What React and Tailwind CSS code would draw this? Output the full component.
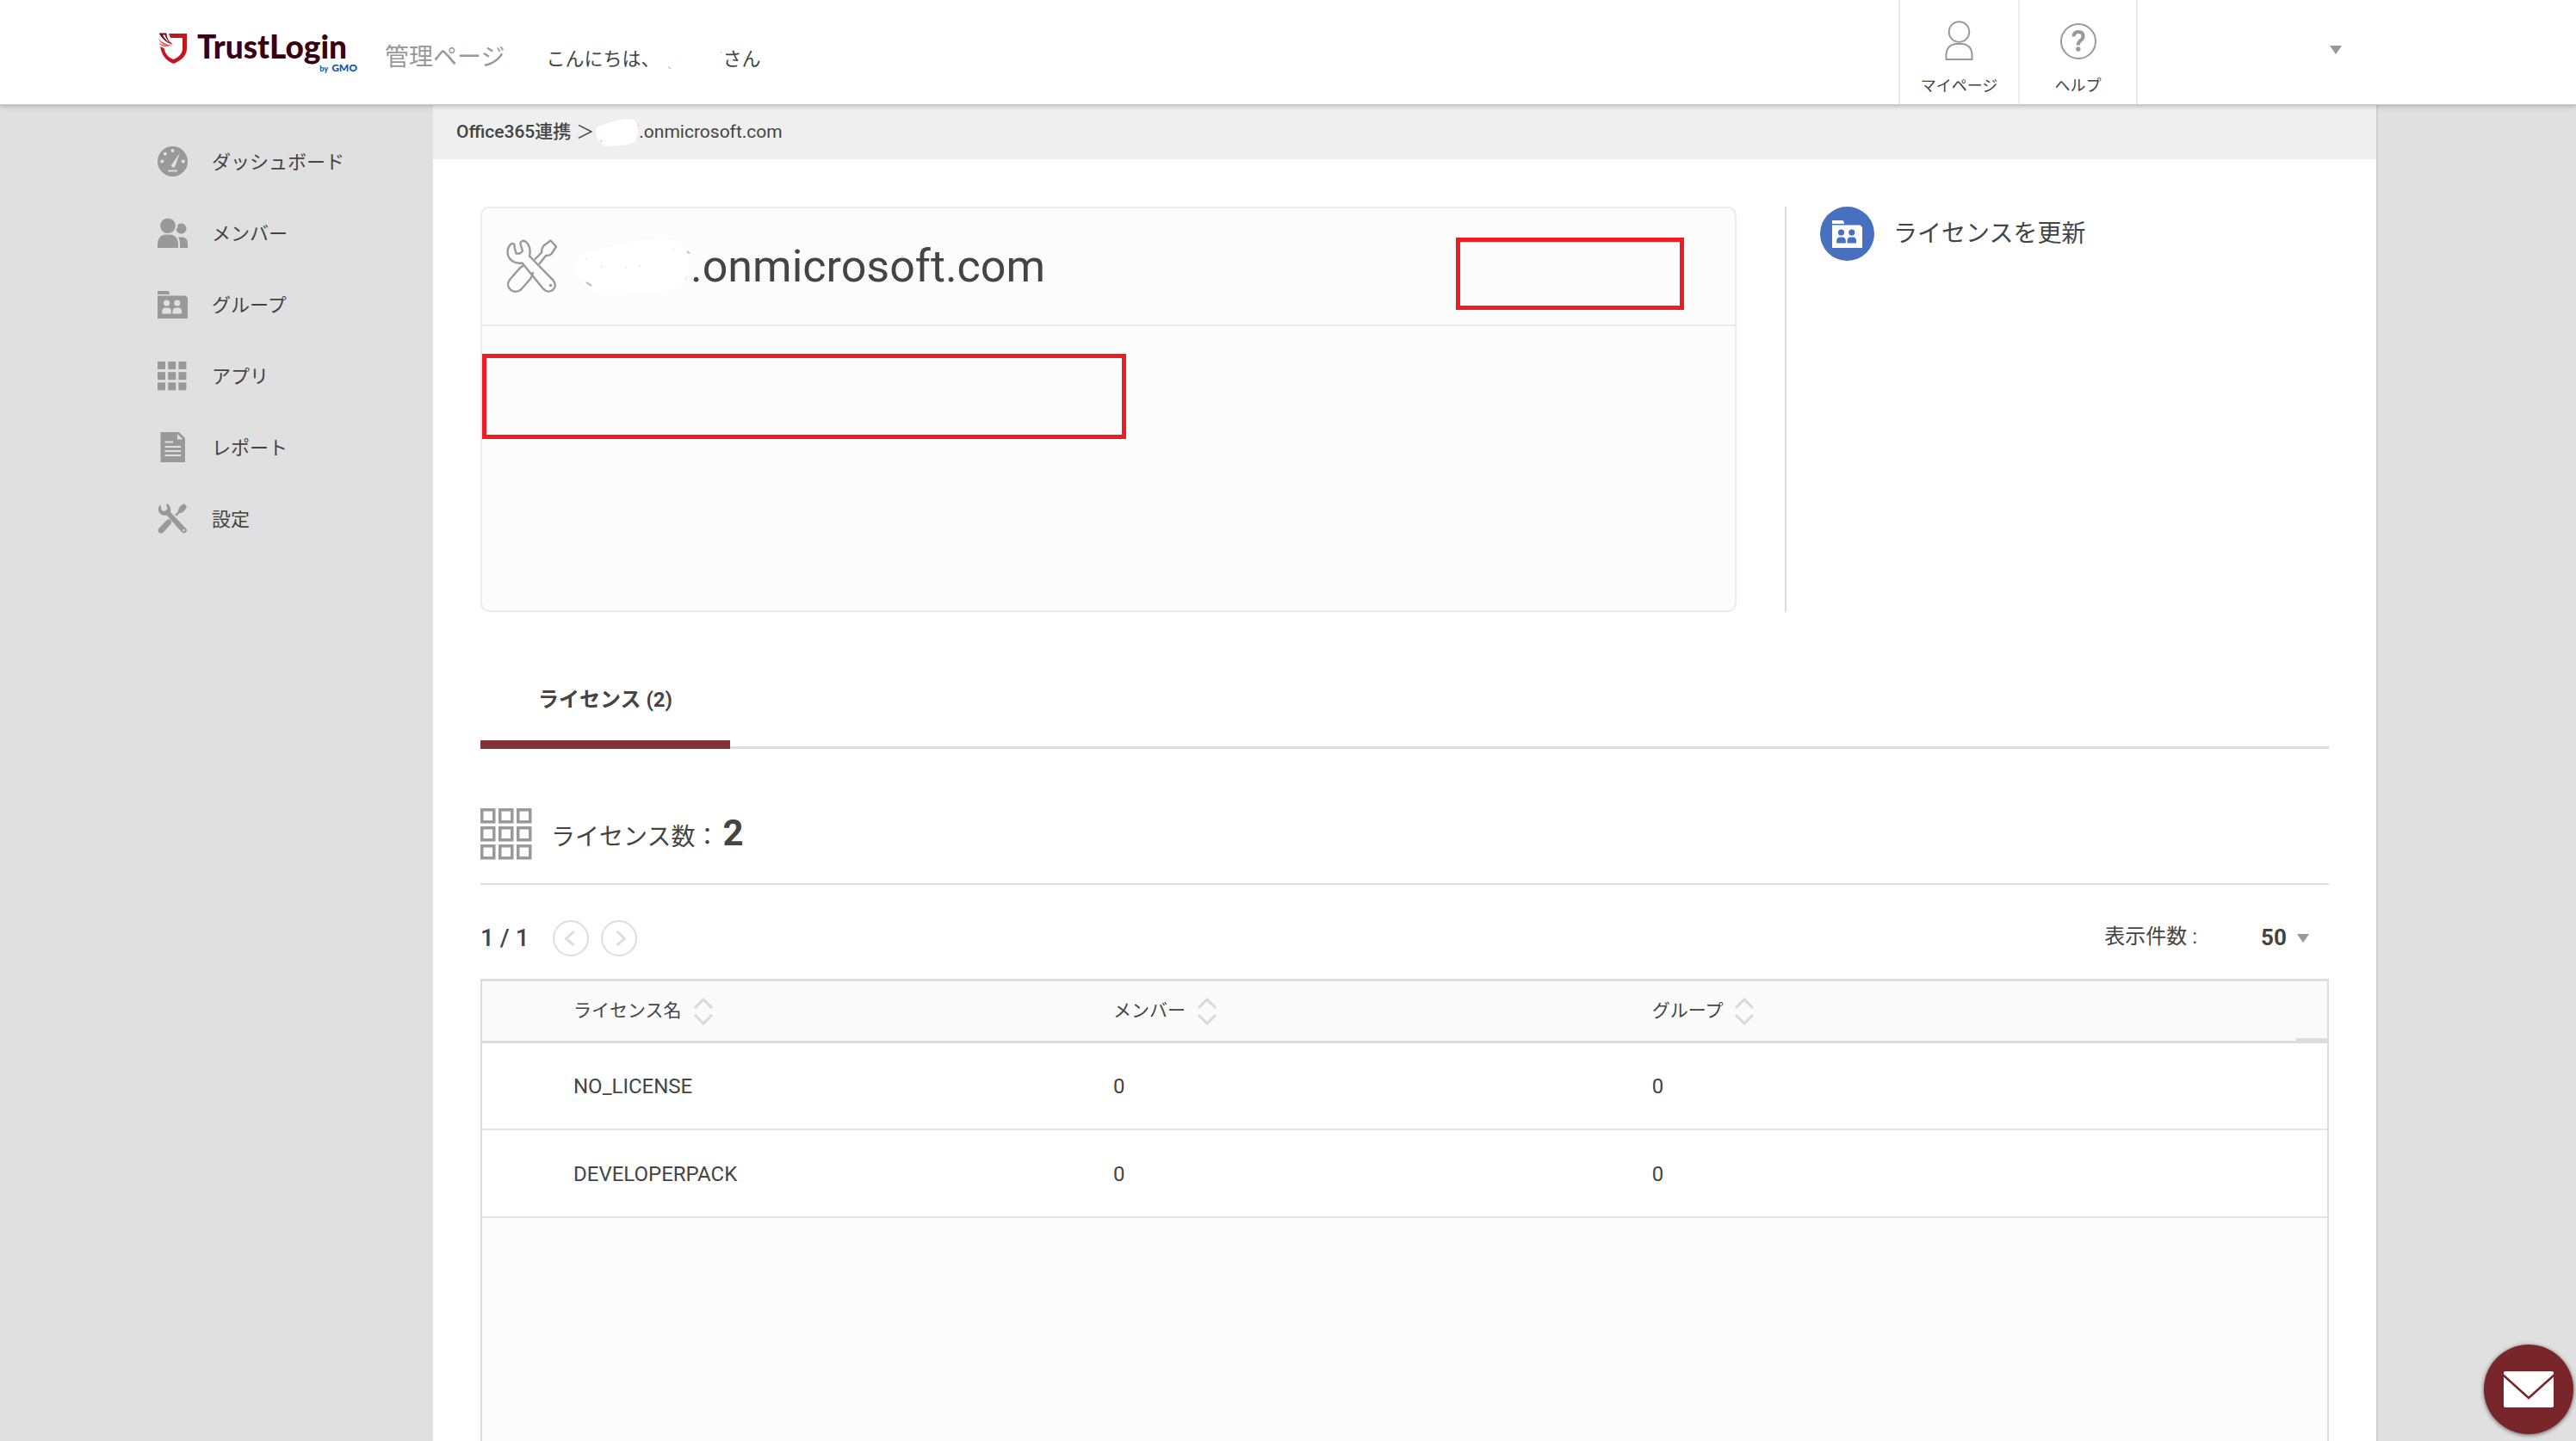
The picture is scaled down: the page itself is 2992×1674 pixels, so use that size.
import React, { useState } from "react";

const DashboardIcon = () => (
  <svg viewBox="0 0 35 35" className="h-[35px] w-[35px]" aria-hidden="true">
    <circle cx="17.5" cy="17.5" r="17.5" fill="#999" />
    <g fill="#e0e0e0">
      <circle cx="17.5" cy="5" r="2" />
      <circle cx="8.7" cy="8.7" r="2" />
      <circle cx="5.3" cy="17.5" r="2" />
      <circle cx="29.7" cy="17.5" r="2" />
      <path d="M26 7.5 16.3 21.3c-1.3 2.8 2.6 4.5 4 2z" />
      <rect x="12" y="27.6" width="11" height="2" rx="1" />
    </g>
  </svg>
);

const MembersIcon = () => (
  <svg viewBox="0 0 35 35" className="h-[35px] w-[35px]" fill="#999" aria-hidden="true">
    <circle cx="12" cy="9.2" r="8.8" />
    <path d="M0 35v-4c0-7 4-11.500 10-11.500h4c6 0 10 4.500 10 11.500v4z" />
    <path d="M21.500 13.500c2-2 2-3.500 1.700-5.200a6 6 0 1 1-1.700 5.200z" />
    <path d="M26 35v-4c0-4-.6-6-2.200-8.500h4.700c4 0 6.500 3 6.500 7V35z" />
  </svg>
);

const FolderUsersIcon = ({ size, color, hole }) => (
  <svg viewBox="0 0 35 35" width={size} height={size} aria-hidden="true">
    <path d="M0 2h11.500c1.600 0 2.500 1.200 2.500 4H0z" fill={color} />
    <path d="M0 7.500h32.500L35 10v24H0z" fill={color} />
    <g fill={hole}>
      <circle cx="10.500" cy="16" r="3.600" />
      <circle cx="22.800" cy="16" r="3.600" />
      <path d="M5.200 28.500v-2.500q0-4.500 4-4.500h2.600q4 0 4 4.500v2.500z" />
      <path d="M17.500 28.500v-2.500q0-4.500 4-4.500h2.600q4 0 4 4.500v2.500z" />
    </g>
  </svg>
);

const gridCells = [0, 1, 2].flatMap((row) => [0, 1, 2].map((col) => [col, row]));

const AppsIcon = () => (
  <svg viewBox="0 0 35 35" className="h-[35px] w-[35px]" fill="#999" aria-hidden="true">
    {gridCells.map(([col, row]) => (
      <rect key={`${col}-${row}`} x={col * 12.2} y={row * 12.2 + 1} width="9" height="9" />
    ))}
  </svg>
);

const ReportIcon = () => (
  <svg viewBox="0 0 35 35" className="h-[35px] w-[35px]" aria-hidden="true">
    <path d="M3.500 0H25l7 7v28H3.500z" fill="#999" />
    <path d="M23 2v6.500h6.500z" fill="#e0e0e0" />
    <g stroke="#e0e0e0" strokeWidth="1.800">
      <path d="M8.500 11.500H18M8.500 17H27M8.500 22H27M8.500 27H27" />
    </g>
  </svg>
);

const SettingsIcon = () => (
  <svg viewBox="0 0 35 35" className="h-[35px] w-[35px]" fill="#999" aria-hidden="true">
    <path d="M3.500 1.500C1.500 3 .8 5 1 7.500 1.500 12 5.500 14.500 10.500 13.500L28 33c3 3.500 8-.8 5-4L15 10c.8-4-.5-8-3.500-10-1.500 0-1.500 1-1 2.500l1 3.500-2.500 2.500H5.800L4.500 7z" />
    <circle cx="30.500" cy="31" r="1.200" fill="#e0e0e0" />
    <path d="M20 13l4-4c0-3 1-4.500 3-6.500L31 0l3 3.500-2.500 4.500c-2 2.200-3.500 3-6 3L22.500 14.500z" />
    <path d="M10.500 19.500c1.500-1.500 3-1.500 4.500-.2 1.500 1.600 1.500 3.200.2 4.700L7 33.200C3.500 36.500-1.500 32.500 1.500 28.800z" />
  </svg>
);

const ToolsIcon = () => (
  <svg
    viewBox="0 0 60 64"
    className="h-16 w-[60px]"
    fill="none"
    stroke="#999"
    strokeWidth="2.400"
    strokeLinejoin="round"
    aria-hidden="true"
  >
    <path d="M9.500 9c.8-3.600-2-5.200-4.400-3.200C2.500 8.500 1.500 12 1.500 15c.3 8.500 8 14 17 12.500l24.500 30c7 7.500 18-.5 12-9.300L27 19.500c1.500-7 0-13-4.500-16.800-3-2-7-.3-5.800 3.300L19 13.500 16 16.500h-4.500z" />
    <circle cx="51.500" cy="53.500" r="1.800" fill="#999" stroke="none" />
    <path d="M33 23.500l8-8c0-4 1-6.500 3-8.500L51.500 1.500 58 8.500l-5.500 8.500c-2 2-3.500 2-6.500 2L38 29" />
    <path d="M20.500 30.500C17 31.500 15.500 33.500 4 47c-6.500 9 5 18 13 11.500L28 46c2.500-3 2.500-4.500 3-8" />
  </svg>
);

const Logo = () => (
  <a href="#top" aria-label="TrustLogin by GMO" className="flex h-14 items-start gap-3">
    <svg viewBox="0 0 33 36" className="mt-1 h-9 w-[33px]" aria-hidden="true">
      <path d="M12 1h21v17c0 9-6.500 14-15.500 18C9 32.500 4 27 2 16l4.500 2C8 25 11.500 28.500 17.500 31c6-2.500 10.500-6.500 10.500-13V6H14z" fill="#c4161c" />
      <path d="M.5.500H9.500c0 6 3 9.500 7.500 13.500C9.500 12 4 7 .5.500z" fill="#7d0a1e" />
      <path d="M5 2.500c2 4 5 7.500 9 9.500C10.500 9 8.500 6 7.500 2.500z" fill="#fff" />
      <path d="M0 6.500c3 4.500 8.500 7.500 16.500 8.500C9 16.500 2.500 13 0 6.500zM.5 11.500c3 2.500 7 4 12 4.200C7 17 2 15.500.5 11.500z" fill="#e2382c" />
    </svg>
    <span className="flex flex-col items-end">
      <span className="font-[Lato,sans-serif] text-[37px] leading-10 font-black text-[#380013]">TrustLogin</span>
      <span className="-mr-3 flex items-baseline gap-1 font-[Lato,sans-serif] text-[12px] leading-[10px] font-black text-[#0a5aa8]">
        <span className="text-[9px] leading-[10px]">by</span>GMO
      </span>
    </span>
  </a>
);

// Smudged area where the tenant or account name is hidden
const Redacted = ({ className }) => (
  <svg viewBox="0 0 140 70" preserveAspectRatio="none" className={className} aria-hidden="true">
    <path d="M12 22Q30 16 60 10Q110 0 128 8Q144 28 134 48Q126 62 90 64L34 66Q20 60 10 46Q0 34 12 22z" fill="#fff" />
    <path d="M19 52l6 4M136 18l3 2" stroke="#bbb" strokeWidth="2" />
    <path d="M18 26h2M37 33v3M64 36h2M80 34h2M119 16h2M135 45v4" stroke="#ddd" strokeWidth="1" />
  </svg>
);

const SortArrows = () => (
  <svg viewBox="0 0 22 32" className="h-8 w-[22px]" fill="none" stroke="#d9d9d9" strokeWidth="3" aria-hidden="true">
    <path d="M1 12L11 2 21 12M1 20L11 30 21 20" />
  </svg>
);

const Caret = () => (
  <svg viewBox="0 0 14 10" className="pointer-events-none h-[10px] w-[14px]" aria-hidden="true">
    <path d="M0 0h14L7 10z" fill="#999" />
  </svg>
);

const navItems = [
  { label: "ダッシュボード", icon: <DashboardIcon /> },
  { label: "メンバー", icon: <MembersIcon /> },
  { label: "グループ", icon: <FolderUsersIcon size={35} color="#999" hole="#e0e0e0" /> },
  { label: "アプリ", icon: <AppsIcon /> },
  { label: "レポート", icon: <ReportIcon /> },
  { label: "設定", icon: <SettingsIcon /> },
];

const licenses = [
  { name: "NO_LICENSE", members: 0, groups: 0 },
  { name: "DEVELOPERPACK", members: 0, groups: 0 },
];

const Header = () => (
  <header className="z-10 flex h-[122px] shrink-0 border-b border-[#c8c8c8] bg-white shadow-[0_1px_6px_rgba(0,0,0,0.25)]">
    <div className="flex flex-1 items-start pt-[34px] pl-[184px]">
      <Logo />
      <span className="ml-11 pt-[13px] text-[28px] leading-10 text-[#999]">管理ページ</span>
      <p className="ml-12 flex pt-[13px] text-[22px] leading-11 text-[#444]">
        こんにちは、
        <Redacted className="mt-1 h-9 w-[73px]" />
        さん
      </p>
    </div>
    <a href="#mypage" className="flex w-[139px] flex-col items-center border-l-2 border-[#ebebeb] pt-6 text-[18px] text-[#444]">
      <svg viewBox="0 0 33 46" className="h-[46px] w-[33px]" fill="none" stroke="#999" strokeWidth="2" aria-hidden="true">
        <circle cx="16.500" cy="13" r="11.800" />
        <path d="M1.500 45V40c0-8 5-13 12-13h6c7 0 12 5 12 13v5z" />
      </svg>
      <span className="mt-[18px] leading-6">マイページ</span>
    </a>
    <a href="#help" className="flex w-[137px] flex-col items-center border-l-2 border-[#ebebeb] pt-6 text-[18px] text-[#444]">
      <svg viewBox="0 0 42 46" className="h-[46px] w-[42px]" fill="none" stroke="#999" aria-hidden="true">
        <circle cx="21" cy="24" r="20" strokeWidth="2" />
        <path d="M15.500 18.500q0-5.500 5.500-5.500t5.500 5q0 3-3 5.200-2.700 2-2.700 5.300" strokeWidth="4" />
        <circle cx="20.800" cy="33" r="2.700" fill="#999" stroke="none" />
      </svg>
      <span className="mt-[18px] leading-6">ヘルプ</span>
    </a>
    <button
      type="button"
      aria-label="アカウント"
      className="flex w-[511px] items-center justify-end border-l-2 border-[#ebebeb] pr-[272px] pb-[6px]"
    >
      <Caret />
    </button>
  </header>
);

const Sidebar = () => (
  <nav className="w-[503px] shrink-0 pt-6 pl-[183px]">
    <ul>
      {navItems.map((item) => (
        <li key={item.label}>
          <a href="#nav" className="flex h-[83px] items-center gap-7 text-[22px] text-[#444]">
            {item.icon}
            <span className="pt-[2px]">{item.label}</span>
          </a>
        </li>
      ))}
    </ul>
  </nav>
);

const columns = [
  { label: "ライセンス名", className: "w-[34.2%] pl-[106px]" },
  { label: "メンバー", className: "w-[29.2%]" },
  { label: "グループ", className: "" },
];

const App = () => {
  const [perPage, setPerPage] = useState("50");

  return (
    <div className="flex h-screen flex-col overflow-hidden bg-[#e0e0e0] font-[Roboto,'Noto_Sans_CJK_JP',sans-serif] text-[#444]">
      <Header />
      <div className="flex min-h-0 flex-1">
        <Sidebar />
        <main className="mr-[230px] flex flex-1 flex-col border-r-2 border-[#d0d0d0] bg-white">
          {/* BREADCRUMB */}
          <div className="flex h-[63px] shrink-0 items-center bg-[#efefef] pl-[27px] text-[21px]">
            <a href="#office365" className="font-medium">Office365連携</a>
            <span className="ml-[6px]">＞</span>
            <Redacted className="h-9 w-[52px]" />
            <span>.onmicrosoft.com</span>
          </div>

          <div className="flex min-h-0 flex-1 flex-col px-[55px] pt-[55px]">
            {/* DOMAIN CARD */}
            <div className="flex">
              <section className="h-[471px] flex-1 rounded-[10px] border-2 border-[#ebebeb] bg-[#fcfcfc]">
                <div className="flex h-[137px] items-center border-b-2 border-[#ebebeb] pr-[59px] pl-7">
                  <ToolsIcon />
                  <Redacted className="ml-[14px] h-[74px] w-[140px]" />
                  <h1 className="flex-1 text-[52px] leading-none">.onmicrosoft.com</h1>
                  <div className="mt-8 mb-4 h-[84px] w-[265px] border-5 border-[#ee1c25]" />
                </div>
                <div className="mt-8 h-[99px] w-[748px] border-5 border-[#ee1c25]" />
              </section>
              <aside className="ml-14 w-[632px] border-l-2 border-[#ddd] pl-[39px]">
                <button type="button" className="flex items-center gap-[22px] text-[28px]">
                  <span className="flex h-[63px] w-[63px] items-center justify-center rounded-full bg-[#4770c0]">
                    <FolderUsersIcon size={35} color="#fff" hole="#4770c0" />
                  </span>
                  <span>ライセンスを更新</span>
                </button>
              </aside>
            </div>

            {/* TABS */}
            <div role="tablist" className="mt-[59px] flex border-b-3 border-[#ddd]">
              <button
                type="button"
                role="tab"
                aria-selected="true"
                className="-mb-[3px] h-[100px] w-[290px] border-b-10 border-[#843236] pb-1 text-[24px] font-bold"
              >
                ライセンス (2)
              </button>
            </div>

            {/* LICENSE COUNT */}
            <div className="flex h-[158px] items-center border-b-2 border-[#ddd] pt-[42px]">
              <svg viewBox="0 0 60 60" className="h-[60px] w-[60px]" fill="none" stroke="#999" strokeWidth="3.500" aria-hidden="true">
                {gridCells.map(([col, row]) => (
                  <rect key={`${col}-${row}`} x={col * 21 + 1.75} y={row * 21 + 1.75} width="14" height="14" />
                ))}
              </svg>
              <h2 className="ml-[22px] flex items-baseline pt-[3px] text-[28px] leading-12">
                ライセンス数：
                <span className="ml-1 text-[42px] font-bold">2</span>
              </h2>
            </div>

            {/* PAGINATION */}
            <div className="flex h-[109px] shrink-0 items-center pt-[14px]">
              <span className="text-[28px] font-medium">1 / 1</span>
              <button type="button" aria-label="前へ" className="ml-[27px]">
                <svg viewBox="0 0 42 42" className="h-[42px] w-[42px]" fill="none" stroke="#ddd" aria-hidden="true">
                  <circle cx="21" cy="21" r="20" strokeWidth="2" />
                  <path d="M24.500 13L15.500 21.500 24.500 29" strokeWidth="3" />
                </svg>
              </button>
              <button type="button" aria-label="次へ" className="ml-[14px]">
                <svg viewBox="0 0 42 42" className="h-[42px] w-[42px]" fill="none" stroke="#ddd" aria-hidden="true">
                  <circle cx="21" cy="21" r="20" strokeWidth="2" />
                  <path d="M18.500 13L27.500 21.500 18.500 29" strokeWidth="3" />
                </svg>
              </button>
              <label htmlFor="per-page" className="ml-auto pb-1 text-[24px]">表示件数 :</label>
              <span className="mr-[23px] ml-[74px] flex items-center">
                <select
                  id="per-page"
                  value={perPage}
                  onChange={(e) => setPerPage(e.target.value)}
                  className="w-[42px] appearance-none bg-transparent text-[26px] font-bold outline-none"
                >
                  <option>50</option>
                  <option>100</option>
                </select>
                <Caret />
              </span>
            </div>

            {/* LICENSE TABLE */}
            <div className="flex-1 border-x-2 border-t-3 border-[#ddd] bg-[#fcfcfc]">
              <table className="w-full table-fixed text-left text-[24px]">
                <thead>
                  <tr className="h-[70px] border-b-3 border-[#ddd] bg-[#fafafa] text-[21px]">
                    {columns.map((column) => (
                      <th key={column.label} className={`font-normal ${column.className}`}>
                        <button type="button" className="flex items-center gap-[14px] pt-[2px]">
                          <span className="pb-[2px]">{column.label}</span>
                          <SortArrows />
                        </button>
                      </th>
                    ))}
                    <td className="w-9 shadow-[inset_0_-3px_#ddd]" />
                  </tr>
                </thead>
                <tbody>
                  {licenses.map((license) => (
                    <tr key={license.name} className="h-[102px] border-b-2 border-[#e4e4e4] bg-white">
                      <td className="pt-[2px] pl-[106px]">{license.name}</td>
                      <td className="pt-[2px]">{license.members}</td>
                      <td className="pt-[2px]" colSpan={2}>{license.groups}</td>
                    </tr>
                  ))}
                </tbody>
              </table>
            </div>
          </div>
        </main>
      </div>

      {/* CONTACT BUTTON */}
      <button
        type="button"
        aria-label="お問い合わせ"
        className="fixed right-[3px] bottom-2 flex h-[104px] w-[104px] items-center justify-center rounded-full bg-[#78262a] shadow-[0_1px_5px_rgba(0,0,0,0.6)]"
      >
        <svg viewBox="0 0 60 44" className="h-11 w-[60px]" aria-hidden="true">
          <rect x="1" y="1" width="58" height="42" rx="2" fill="#fff" />
          <path d="M0 5L30 32 60 5" fill="none" stroke="#78262a" strokeWidth="2.500" />
        </svg>
      </button>
    </div>
  );
};

export default App;
